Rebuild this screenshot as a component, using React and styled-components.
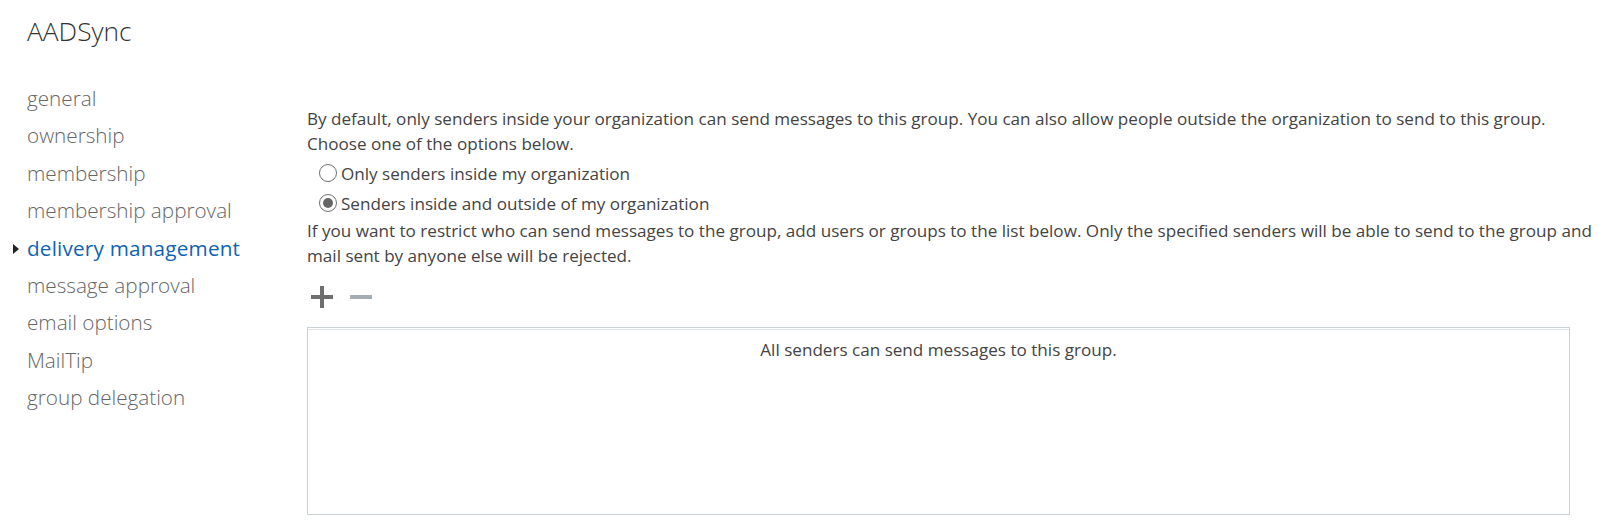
import React from 'react';
import styled, { createGlobalStyle } from 'styled-components';

const GlobalStyle = createGlobalStyle`
  body {
    margin: 0;
    background: #fff;
    font-family: "Open Sans", "Noto Sans", sans-serif;
    color: #444;
  }
`;

const Page = styled.div`
  display: flex;
  width: 1599px;
  height: 528px;
  overflow: hidden;
`;

const Sidebar = styled.div`
  width: 307px;
  flex-shrink: 0;
  padding: 13px 0 0 27px;
  box-sizing: border-box;
`;

const Title = styled.div`
  font-size: 26.3px;
  font-weight: 300;
  color: #333;
  line-height: 36px;
  margin-bottom: 31px;
`;

const NavList = styled.ul`
  list-style: none;
  margin: 0;
  padding: 0;
`;

const NavItem = styled.li`
  position: relative;
  font-size: 20.7px;
  font-weight: ${(p) => (p.active ? 400 : 300)};
  letter-spacing: ${(p) => (p.active ? '0.2px' : '0')};
  line-height: 37.4px;
  color: ${(p) => (p.active ? '#0f64b4' : '#666')};
  white-space: nowrap;
`;

const Marker = styled.span`
  position: absolute;
  left: -14px;
  top: 14px;
  width: 0;
  height: 0;
  border-top: 5px solid transparent;
  border-bottom: 5px solid transparent;
  border-left: 6px solid #222;
`;

const Main = styled.div`
  flex: 1;
  min-width: 0;
  padding-top: 106px;
  font-size: 17.1px;
  line-height: 25px;
`;

const Para = styled.p`
  margin: 0;
`;

const RadioGroup = styled.div`
  display: flex;
  flex-direction: column;
  padding-left: 12px;
  margin: 2px 0 0;
`;

const RadioRow = styled.label`
  display: flex;
  align-items: center;
  gap: 4px;
  height: 30px;
`;

const RadioCircle = styled.span`
  width: 18px;
  height: 18px;
  box-sizing: border-box;
  border-radius: 50%;
  border: 1px solid #6f6f6f;
  display: flex;
  align-items: center;
  justify-content: center;
  background: #fff;

  &::after {
    content: '';
    width: 10px;
    height: 10px;
    border-radius: 50%;
    background: ${(p) => (p.checked ? '#666' : 'transparent')};
  }
`;

const Toolbar = styled.div`
  display: flex;
  align-items: center;
  gap: 17px;
  height: 38px;
  padding-left: 4px;
  margin-top: 10px;
`;

const ToolButton = styled.span`
  display: flex;
  width: 22px;
  height: 22px;
`;

const ListBox = styled.div`
  height: 188px;
  margin: 11px 29px 0 0;
  border: 1px solid #c9d1d5;
  box-shadow: inset 0 1px 0 #fff, inset 0 2px 0 #dde3e6;
  text-align: center;
  padding-top: 9px;
  box-sizing: border-box;
`;

const navItems = [
  'general',
  'ownership',
  'membership',
  'membership approval',
  'delivery management',
  'message approval',
  'email options',
  'MailTip',
  'group delegation',
];

export default function App() {
  return (
    <Page>
      <GlobalStyle />
      <Sidebar>
        <Title>AADSync</Title>
        <NavList>
          {navItems.map((item) => (
            <NavItem key={item} active={item === 'delivery management'}>
              {item === 'delivery management' && <Marker />}
              {item}
            </NavItem>
          ))}
        </NavList>
      </Sidebar>
      <Main>
        <Para>
          By default, only senders inside your organization can send messages to this group. You can also allow people outside the organization to send to this group. Choose one of the options below.
        </Para>
        <RadioGroup>
          <RadioRow>
            <RadioCircle />
            Only senders inside my organization
          </RadioRow>
          <RadioRow>
            <RadioCircle checked />
            Senders inside and outside of my organization
          </RadioRow>
        </RadioGroup>
        <Para>
          If you want to restrict who can send messages to the group, add users or groups to the list below. Only the specified senders will be able to send to the group and mail sent by anyone else will be rejected.
        </Para>
        <Toolbar>
          <ToolButton>
            <svg width="22" height="22" viewBox="0 0 22 22">
              <rect x="0" y="9" width="22" height="4" fill="#6e6e6e" />
              <rect x="9" y="0" width="4" height="22" fill="#6e6e6e" />
            </svg>
          </ToolButton>
          <ToolButton>
            <svg width="22" height="22" viewBox="0 0 22 22">
              <rect x="0" y="9" width="22" height="4" fill="#a3afb3" />
            </svg>
          </ToolButton>
        </Toolbar>
        <ListBox>All senders can send messages to this group.</ListBox>
      </Main>
    </Page>
  );
}
